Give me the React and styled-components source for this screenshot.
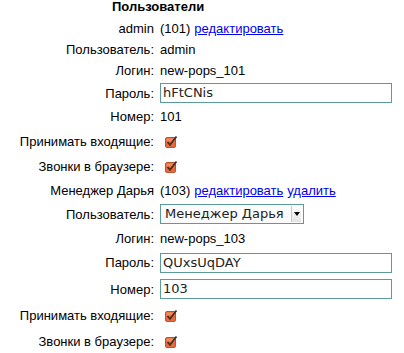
import React from "react";
import styled, { createGlobalStyle } from "styled-components";

const GlobalStyle = createGlobalStyle`
  html, body {
    margin: 0;
    padding: 0;
    background: #ffffff;
  }
  body {
    font-family: "Liberation Sans", Arial, sans-serif;
    font-size: 13px;
    color: #000;
  }
`;

const Wrap = styled.div`
  width: 404px;
  height: 353px;
  overflow: hidden;
  display: flex;
  flex-direction: column;
`;

const Heading = styled.div`
  height: 17px;
  flex-shrink: 0;
  line-height: 14px;
  padding-left: 112px;
  font-weight: bold;
`;

const Row = styled.div`
  display: flex;
  align-items: center;
  gap: 6px;
  height: ${(p) => p.h}px;
  flex-shrink: 0;
`;

const Label = styled.div`
  width: 154px;
  text-align: right;
  white-space: nowrap;
  line-height: 15px;
`;

const Value = styled.div`
  display: flex;
  align-items: center;
  white-space: nowrap;
  line-height: 15px;
`;

const A = styled.a`
  color: #0000ee;
  text-decoration: underline;
  margin-left: 4px;
  cursor: pointer;
`;

const Field = styled.div`
  box-sizing: border-box;
  width: ${(p) => p.w}px;
  height: 20px;
  border: 1px solid #5c9c98;
  background: #fff;
  font-family: "DejaVu Sans", sans-serif;
  font-size: 13px;
  color: #222;
  line-height: 18px;
  padding-left: 2px;
`;

const Select = styled(Field)`
  display: flex;
  align-items: center;
  justify-content: space-between;
  padding: 0 2px 0 4px;
  background: #fbfbfb;
`;

const Arrow = styled.span`
  box-sizing: border-box;
  width: 10px;
  height: 16px;
  background: linear-gradient(#fdfdfd, #e4e4e4);
  border-left: 1px solid #c8c8c8;
  display: flex;
  align-items: center;
  justify-content: center;
`;

const Check = styled.span`
  display: inline-block;
  margin-left: 5px;
  width: 14px;
  height: 13px;
`;

const CheckIcon = () => (
  <Check>
    <svg width="14" height="13" viewBox="0 0 14 13">
      <rect x="0.5" y="2.5" width="10" height="10" rx="1.5" fill="#e86a3c" stroke="#b95430" />
      <rect x="1.5" y="3.5" width="8" height="3" fill="#f08a5e" />
      <path d="M2.5 7 L5 9.8 L11.5 1.5" fill="none" stroke="#4a2c1e" strokeWidth="1.8" />
    </svg>
  </Check>
);

const Caret = () => (
  <Arrow>
    <svg width="6" height="4" viewBox="0 0 6 4">
      <path d="M0 0 H6 L3 4 Z" fill="#000" />
    </svg>
  </Arrow>
);

export default function App() {
  return (
    <Wrap>
      <GlobalStyle />
      <Heading>Пользователи</Heading>

      <Row h={22}>
        <Label>admin</Label>
        <Value>
          (101)<A>редактировать</A>
        </Value>
      </Row>
      <Row h={20}>
        <Label>Пользователь:</Label>
        <Value>admin</Value>
      </Row>
      <Row h={22}>
        <Label>Логин:</Label>
        <Value>new-pops_101</Value>
      </Row>
      <Row h={24}>
        <Label>Пароль:</Label>
        <Field w={232}>hFtCNis</Field>
      </Row>
      <Row h={23}>
        <Label>Номер:</Label>
        <Value>101</Value>
      </Row>
      <Row h={26}>
        <Label>Принимать входящие:</Label>
        <CheckIcon />
      </Row>
      <Row h={25}>
        <Label>Звонки в браузере:</Label>
        <CheckIcon />
      </Row>

      <Row h={23}>
        <Label>Менеджер Дарья</Label>
        <Value>
          (103)<A>редактировать</A>
          <A>удалить</A>
        </Value>
      </Row>
      <Row h={24}>
        <Label>Пользователь:</Label>
        <Select w={144}>
          Менеджер Дарья
          <Caret />
        </Select>
      </Row>
      <Row h={25}>
        <Label>Логин:</Label>
        <Value>new-pops_103</Value>
      </Row>
      <Row h={23}>
        <Label>Пароль:</Label>
        <Field w={232}>QUxsUqDAY</Field>
      </Row>
      <Row h={30}>
        <Label>Номер:</Label>
        <Field w={232}>103</Field>
      </Row>
      <Row h={22}>
        <Label>Принимать входящие:</Label>
        <CheckIcon />
      </Row>
      <Row h={31}>
        <Label>Звонки в браузере:</Label>
        <CheckIcon />
      </Row>
    </Wrap>
  );
}
